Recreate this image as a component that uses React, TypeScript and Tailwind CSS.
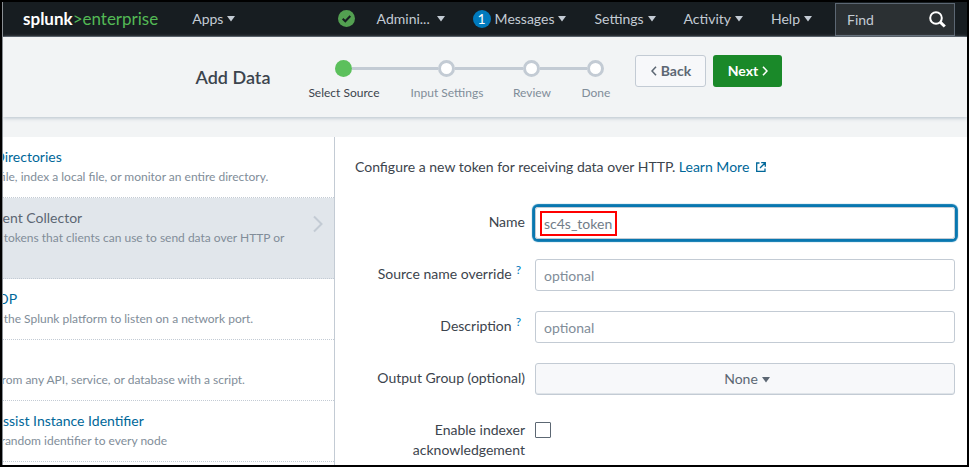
import React from "react";

function Caret({ className = "" }: { className?: string }) {
  return (
    <svg className={`shrink-0 ${className}`} width="8" height="6" viewBox="0 0 8 6" aria-hidden="true">
      <path d="M0 0h8L4 5.5z" fill="currentColor" />
    </svg>
  );
}

function NavButton({ label, children }: { label: string; children?: React.ReactNode }) {
  return (
    <button type="button" className="flex h-full items-center justify-between gap-1 px-3.5 text-[#c3cbd4]">
      {children}
      <span>{label}</span>
      <Caret />
    </button>
  );
}

function TopNav() {
  return (
    <nav className="flex h-[35px] shrink-0 items-stretch justify-between border-b border-[#3c444d] bg-[#171d21] pr-3 pl-5">
      <div className="flex items-center">
        <a href="#home" className="pb-px text-[17px] leading-5 whitespace-nowrap text-[#53b955]">
          <span className="font-bold text-white">splunk</span>&gt;enterprise
        </a>
        <div className="ml-5 flex h-full">
          <NavButton label="Apps" />
        </div>
      </div>
      <div className="flex items-center">
        <button type="button" aria-label="Health status" className="mb-px px-2">
          <svg width="17" height="17" viewBox="0 0 17 17" aria-hidden="true">
            <circle cx="8.5" cy="8.5" r="8.5" fill="#53a051" />
            <path d="M4.7 8.8l2.6 2.5 5-5.3" fill="none" stroke="#171d21" strokeWidth="2" />
          </svg>
        </button>
        <div className="flex h-full">
          <button type="button" className="flex h-full w-24 items-center justify-between px-3.5 text-[#c3cbd4]">
            <span>Admini...</span>
            <Caret />
          </button>
          <NavButton label="Messages">
            <span className="flex size-[18px] items-center justify-center rounded-full bg-[#007abd] text-white">1</span>
          </NavButton>
          <NavButton label="Settings" />
          <NavButton label="Activity" />
          <NavButton label="Help" />
        </div>
        <label className="mt-px ml-[9px] flex h-[33px] w-[120px] items-center border border-[#5c6773] bg-[#2b3033] pr-2 pl-[11px]">
          <input
            type="text"
            aria-label="Find"
            placeholder="Find"
            className="w-0 flex-1 bg-transparent text-[#c3cbd4] outline-none placeholder:text-[#c3cbd4]"
          />
          <svg width="17" height="17" viewBox="0 0 17 17" fill="none" stroke="#fff" aria-hidden="true">
            <circle cx="7" cy="7" r="5.8" strokeWidth="2" />
            <path d="M11.2 11.2l4.6 4.3" strokeWidth="3" />
          </svg>
        </label>
      </div>
    </nav>
  );
}

const steps = [
  { label: "Select Source", width: "w-[103px]" },
  { label: "Input Settings", width: "w-[103px]" },
  { label: "Review", width: "w-[67px]" },
  { label: "Done", width: "w-[61px]" },
];

function Stepper() {
  return (
    <ol className="flex text-xs leading-5">
      {steps.map((step, i) => (
        <li key={step.label} className={`flex flex-col items-center gap-1.5 ${step.width}`}>
          <span className="flex w-full items-center">
            <span className={`h-[3px] flex-1 ${i === 0 ? "" : "bg-[#c3cbd4]"}`} />
            <span
              className={`size-[17px] rounded-full ${i === 0 ? "bg-[#5cc05c]" : "border-3 border-[#c3cbd4] bg-white"}`}
            />
            <span className={`h-[3px] flex-1 ${i === steps.length - 1 ? "" : "bg-[#c3cbd4]"}`} />
          </span>
          <span className={i === 0 ? "text-[#3c444d]" : "text-[#818d99]"}>{step.label}</span>
        </li>
      ))}
    </ol>
  );
}

function Chevron({ d }: { d: string }) {
  return (
    <svg width="6" height="10" viewBox="0 0 6 10" fill="none" stroke="currentColor" strokeWidth="1.6" aria-hidden="true">
      <path d={d} />
    </svg>
  );
}

function WizardHeader() {
  return (
    <header className="z-10 flex h-20 shrink-0 justify-center bg-[#f2f4f5] pl-2 shadow-[0_1px_4px_#b4bfca]">
      <h1 className="mt-[30px] text-lg leading-5 font-semibold text-[#3c444d]">Add Data</h1>
      <div className="mt-[23px] ml-[22px]">
        <Stepper />
      </div>
      <div className="mt-[18px] ml-[9px] flex gap-[7px] font-bold">
        <button
          type="button"
          className="flex h-8 w-[71px] items-center justify-center gap-1 rounded-[3px] border border-[#c3cbd4] bg-[#f7f8fa] text-[#5c6773]"
        >
          <Chevron d="M5 .8L1 5l4 4.2" />
          Back
        </button>
        <button
          type="button"
          className="flex h-8 w-[69px] items-center justify-center gap-1 rounded-[3px] bg-[#1a8929] text-white"
        >
          Next
          <Chevron d="M1 .8L5 5 1 9.2" />
        </button>
      </div>
    </header>
  );
}

const sources = [
  { title: "Files & Directories", text: "Upload a file, index a local file, or monitor an entire directory." },
  {
    title: "HTTP Event Collector",
    text: "Configure tokens that clients can use to send data over HTTP or HTTPS.",
    selected: true,
  },
  { title: "TCP / UDP", text: "Configure the Splunk platform to listen on a network port." },
  { title: "Scripts", text: "Get data from any API, service, or database with a script." },
  { title: "Splunk Assist Instance Identifier", text: "Assigns a random identifier to every node" },
];

function SourceList() {
  return (
    <ul className="w-[332px] shrink-0 overflow-hidden border-r border-[#c3cbd4] bg-white">
      {sources.map((s) => (
        <li
          key={s.title}
          className={`flex items-start justify-between border-b border-dotted border-[#c3cbd4] pt-2.5 pr-[11px] pb-2.5 ${
            s.selected ? "bg-[#e1e6eb]" : ""
          }`}
        >
          <div className="-ml-[54px] w-[350px]">
            <a href="#source" className={`block leading-5 ${s.selected ? "text-[#5c6773]" : "text-[#006799]"}`}>
              {s.title}
            </a>
            <p className="text-xs leading-5 text-[#818d99]">{s.text}</p>
          </div>
          {s.selected && (
            <svg className="mt-[7px]" width="10" height="18" viewBox="0 0 10 18" fill="none" stroke="#c3cbd4" strokeWidth="2" aria-hidden="true">
              <path d="M1 1.5L8.5 9 1 16.5" />
            </svg>
          )}
        </li>
      ))}
    </ul>
  );
}

function Row({ id, label, help, children }: { id: string; label: string; help?: boolean; children: React.ReactNode }) {
  return (
    <div className="flex min-h-8 gap-2.5">
      <div className="w-[170px] shrink-0 pt-[5px] text-right leading-5">
        <label htmlFor={id}>{label}</label>
        {help && (
          <a href="#help" className="mr-1 ml-1 align-[5px] text-xs leading-none text-[#007abd]">
            ?
          </a>
        )}
      </div>
      <div className="relative min-w-0 flex-1">{children}</div>
    </div>
  );
}

const box = "block h-8 w-full rounded-[3px] border border-[#c3cbd4] px-2 placeholder:text-[#818d99] outline-none";

function TokenForm() {
  return (
    <main className="min-w-0 flex-1 bg-white pt-5 pr-3 pl-5 text-[#3c444d]">
      <p className="leading-5">
        Configure a new token for receiving data over HTTP.{" "}
        <a href="#learn" className="inline-flex items-center gap-[7px] text-[#006799]">
          Learn More
          <svg width="10" height="10" viewBox="0 0 10 10" fill="none" stroke="currentColor" strokeWidth="1.3" aria-hidden="true">
            <path d="M3.5 1H.7v8.3H9V6.5M5.2 .7h4.1v4.1M9 1L4 6" />
          </svg>
        </a>
      </p>
      <form className="mt-[30px] flex flex-col gap-5">
        <Row id="name" label="Name">
          <input id="name" type="text" defaultValue="sc4s_token" className={`${box} text-[#717d89] shadow-[0_0_1px_3px_#0877b0]`} />
          <span className="pointer-events-none absolute top-1 left-[5px] h-[25px] w-[77px] border-2 border-[#ff0000]" />
        </Row>
        <Row id="source" label="Source name override" help>
          <input id="source" type="text" placeholder="optional" className={box} />
        </Row>
        <Row id="description" label="Description" help>
          <input id="description" type="text" placeholder="optional" className={box} />
        </Row>
        <Row id="group" label="Output Group (optional)">
          <select
            id="group"
            className="block h-8 w-full appearance-none rounded-[3px] border border-[#c3cbd4] bg-[#f7f8fa] pr-2 text-center text-[#5c6773] shadow-[inset_0_-1px_#dfe4e9] [text-align-last:center]"
          >
            <option>None</option>
          </select>
          <Caret className="pointer-events-none absolute top-3.5 left-1/2 ml-[17px] text-[#5c6773]" />
        </Row>
        <Row id="ack" label="Enable indexer acknowledgement">
          <input
            id="ack"
            type="checkbox"
            className="mt-[7px] block size-4 appearance-none rounded-[1px] border border-[#5c6773] bg-white"
          />
        </Row>
      </form>
    </main>
  );
}

export default function App() {
  return (
    <div className="h-screen border-2 border-black bg-[#f2f4f5] font-['Lato',sans-serif] text-sm">
      <div className="flex h-full flex-col overflow-hidden border-l border-[#8a8f94]">
        <TopNav />
        <WizardHeader />
        <div className="flex min-h-0 flex-1 overflow-hidden pt-5">
          <SourceList />
          <TokenForm />
        </div>
      </div>
    </div>
  );
}
